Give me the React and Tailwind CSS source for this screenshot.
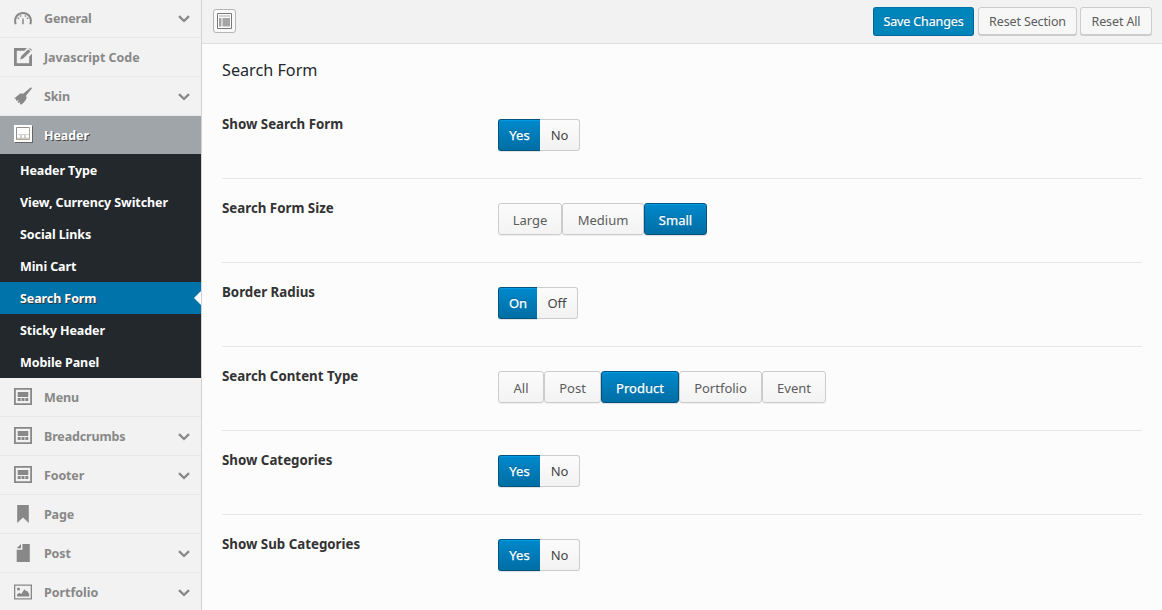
function Glyph({ name }) {
  switch (name) {
    case "gauge":
      return (
        <svg width="18" height="18" viewBox="0 0 18 18" fill="none" stroke="currentColor">
          <path d="M1.6 15.200C-.2 8.500 3.500 4 9 4s9.200 4.500 7.400 11.200" strokeWidth="2" />
          <path d="M9 9.500v5.800" strokeWidth="1.500" />
          <path d="M3.600 9.300h1.600M5.800 7h1.500M10.700 7h1.500M12.800 9.300h1.600" strokeWidth="1.400" />
        </svg>
      );
    case "edit":
      return (
        <svg width="18" height="18" viewBox="0 0 18 18" fill="currentColor">
          <path d="M0 0h13l-2.600 2.800H2.800v12.400h12.400V8.500L18 5.700V18H0z" />
          <path d="M14.200 1.200l2.300 2.200-7.300 7.100-3 .9.900-3.100zM15 .6l.8-.6L18 2l-.8.8z" />
        </svg>
      );
    case "broom":
      return (
        <svg width="18" height="18" viewBox="0 0 18 18" fill="currentColor">
          <path d="M17 .3l1 1-6 7.400.7 2.300c-1.300 2.700-3 4.800-5.500 6.700l-1.300-.6.500-2-1.700 1-1.200-1 1.500-2-2.500.8L1.800 12 0 11.200c2.200-1 3.600-2.800 5.500-4.300 1.200-.5 2.400-.2 3.600-.1z" />
        </svg>
      );
    case "bookmark":
      return (
        <svg width="18" height="18" viewBox="0 0 18 18" fill="currentColor">
          <path d="M3.200 0h11.600v18L9 12.500 3.200 18z" />
        </svg>
      );
    case "file":
      return (
        <svg width="18" height="18" viewBox="0 0 18 18" fill="currentColor">
          <path d="M8.400 0h7.400v18H2.700V5.800h5.700zM7 0v4.300H2.700z" />
        </svg>
      );
    case "picture":
      return (
        <svg width="18" height="18" viewBox="0 0 18 18" fill="currentColor">
          <path fillRule="evenodd" d="M0 1.500h18V16.500H0zM1.300 2.800v12.400h15.400V2.800z" />
          <circle cx="4.500" cy="6" r="1.500" />
          <path d="M3 13.500v-2l2.500-1.700L7.300 11l3-4.800 2 2 .7-.4 2.200 3v2.700z" />
        </svg>
      );
    case "panel-active":
      return (
        <svg width="19" height="18" viewBox="0 0 19 18">
          <path d="M1 1h18v17H1z" fill="#666" />
          <path d="M0 0h18v17H0z" fill="#fff" />
          <path d="M2.500 14.500v-12h13" fill="none" stroke="#938f8c" />
          <path d="M15.500 2.500v12h-13" fill="none" stroke="#b5a78f" />
          <path d="M4 9.500h11" stroke="#d5d5d5" />
          <path d="M7 10v3M11 10v3" stroke="#999" strokeWidth="0.900" />
          <path d="M3 13.300h12" stroke="#a9a9a9" strokeWidth="0.800" />
        </svg>
      );
    default:
      return (
        <svg width="18" height="18" viewBox="0 0 18 18" fill="currentColor">
          <path fillRule="evenodd" d="M0 0h18v17H0zM1.800 1.800v13.400h14.400V1.800z" />
          <path d="M3.700 4h10.600v5H3.700zM3.700 10h3v3h-3zM7.500 10h3v3h-3zM11.300 10h3v3h-3z" />
        </svg>
      );
  }
}

function Chevron() {
  return (
    <svg className="mr-[11px]" width="12" height="8" viewBox="0 0 12 8" fill="none" stroke="currentColor" strokeWidth="2.300">
      <path d="M1 1.200l5 4.800 5-4.800" />
    </svg>
  );
}

function NavItem({ icon, label, expandable, first, tight }) {
  return (
    <div className={(first ? "h-[38px] " : "h-[39px] pt-px ") + "flex shrink-0 items-center border-b border-[#e7e7e7] text-[#888]"}>
      <span className="ml-[14px] mr-[12px] -mt-0.5 block h-[18px] w-[18px]"><Glyph name={icon} /></span>
      <span className={(tight ? "tracking-[-0.15px] " : "tracking-[-0.03px] ") + "flex-1 whitespace-nowrap text-[12.5px] font-bold leading-[18px]"}>{label}</span>
      {expandable && <Chevron />}
    </div>
  );
}

const subItems = ["Header Type", "View, Currency Switcher", "Social Links", "Mini Cart", "Search Form", "Sticky Header", "Mobile Panel"];

function Sidebar() {
  return (
    <aside className="flex h-full w-[202px] shrink-0 flex-col overflow-hidden border-r border-[#d2d2d2] bg-[#f2f2f2]">
      <NavItem first icon="gauge" label="General" expandable tight />
      <NavItem icon="edit" label="Javascript Code" />
      <NavItem icon="broom" label="Skin" expandable tight />
      <div className="flex h-[38px] shrink-0 items-center bg-[#a0a5a9] text-white">
        <span className="-mt-0.5 ml-[14px] mr-[11px] block h-[18px] w-[19px]"><Glyph name="panel-active" /></span>
        <span className="pt-0.5 text-[12.5px] font-bold leading-[18px] tracking-[-0.1px] [text-shadow:1px_1px_0_#444]">Header</span>
      </div>
      <ul className="shrink-0 bg-[#23282d] text-[12.5px] font-bold leading-[32px] tracking-[-0.09px] text-white">
        {subItems.map((t) =>
          t === "Search Form" ? (
            <li key={t} className="flex h-8 items-center justify-between bg-[#0073aa] pl-5 [text-shadow:1px_1px_0_#333]">
              <span className="pt-0.5">{t}</span>
              <svg width="7" height="14" viewBox="0 0 7 14" fill="#fcfcfc"><path d="M7 0v14L0 7z" /></svg>
            </li>
          ) : (
            <li key={t} className="h-8 pl-5 pt-px">{t}</li>
          )
        )}
      </ul>
      <NavItem icon="panel" label="Menu" tight />
      <NavItem icon="panel" label="Breadcrumbs" expandable tight />
      <NavItem icon="panel" label="Footer" expandable tight />
      <NavItem icon="bookmark" label="Page" tight />
      <NavItem icon="file" label="Post" expandable tight />
      <NavItem icon="picture" label="Portfolio" expandable />
    </aside>
  );
}

const activeStyle =
  "relative border-[#00547d] bg-linear-to-b from-[#0089cc] to-[#006ea5] text-white [box-shadow:inset_0_1px_0_#009be6,0_1px_0_#0000001a] [text-shadow:0_-1px_1px_#006799] [-webkit-text-stroke:0.25px_white]";

function Toggle({ on, off, onW, offW }) {
  return (
    <div className="flex h-8 text-[13px] leading-[30px]">
      <button className={onW + " rounded-l-[3px] border border-r-0 " + activeStyle}>{on}</button>
      <button className={offW + " rounded-r-[3px] border border-l-0 border-[#ccc] bg-linear-to-b from-[#fcfcfc] to-[#f2f2f2] text-[#444]"}>{off}</button>
    </div>
  );
}

function ButtonSet({ items, active }) {
  return (
    <div className="flex h-8 text-[13px] leading-[32px]">
      {items.map(([t, w]) => (
        <button
          key={t}
          className={w + " h-8 rounded-[3px] border " + (t === active ? activeStyle : "border-[#ccc] bg-linear-to-b from-[#fbfbfb] to-[#f3f3f3] text-[#5c5c5c] shadow-[0_1px_0_#0000000d]")}
        >
          {t}
        </button>
      ))}
    </div>
  );
}

function Field({ label, last, children }) {
  return (
    <div className={(last ? "" : "border-b border-[#e7e7e7] ") + "flex h-[84px] items-start pt-6"}>
      <div className="-mt-1 w-[276px] text-[13.3px] font-bold leading-[18px] text-[#333]">{label}</div>
      {children}
    </div>
  );
}

export default function App() {
  return (
    <div className="flex h-[610px] w-[1162px] overflow-hidden bg-[#fcfcfc] font-['Noto_Sans','Open_Sans',sans-serif]">
      <Sidebar />
      <main className="flex min-w-0 flex-1 flex-col">
        <header className="flex h-11 shrink-0 items-start justify-between border-b border-[#dedede] bg-[#f2f2f2] pl-[11px] pr-[10px]">
          <button className="mt-[9px] flex h-6 w-[23px] items-center justify-center rounded-[3px] border border-[#b5b5b5] bg-[#f9f9f9]">
            <svg width="15" height="16" viewBox="0 0 15 16">
              <path d="M.5.500h14v15H.500z" fill="#fff" stroke="#777" />
              <path d="M2 2.500h11v1H2zM2 5h2.500v8.500H2zM5.500 5H13v8.500H5.500z" fill="#a5a5a5" />
            </svg>
          </button>
          <div className="flex pt-[7px] text-[12.5px] leading-[27px]">
            <button className="mr-1 h-[29px] w-[101px] rounded-[3px] border border-[#006799] border-t-[#0073aa] bg-[#0085ba] tracking-[-0.13px] text-white [text-shadow:0_-1px_1px_#006799] [-webkit-text-stroke:0.2px_white]">Save Changes</button>
            <button className="mr-[3px] h-[28px] w-[99px] rounded-[3px] border border-[#ccc] bg-[#f7f7f7] tracking-[-0.13px] text-[#5c5c5c] shadow-[0_1px_0_#ccc]">Reset Section</button>
            <button className="h-[28px] w-[72px] rounded-[3px] border border-[#ccc] bg-[#f7f7f7] tracking-[-0.13px] text-[#5c5c5c] shadow-[0_1px_0_#ccc]">Reset All</button>
          </div>
        </header>
        <section className="flex flex-col pl-5 pr-5">
          <h3 className="mt-[15px] h-[36px] text-[16.2px] leading-[22px] text-[#23282d]">Search Form</h3>
          <Field label="Show Search Form"><Toggle on="Yes" off="No" onW="w-[42px]" offW="w-[40px]" /></Field>
          <Field label="Search Form Size">
            <ButtonSet active="Small" items={[["Large", "w-[64px]"], ["Medium", "w-[82px]"], ["Small", "w-[63px]"]]} />
          </Field>
          <Field label="Border Radius"><Toggle on="On" off="Off" onW="w-[39px]" offW="w-[41px]" /></Field>
          <Field label="Search Content Type">
            <ButtonSet active="Product" items={[["All", "w-[46px]"], ["Post", "w-[57px]"], ["Product", "w-[78px]"], ["Portfolio", "w-[83px]"], ["Event", "w-[64px]"]]} />
          </Field>
          <Field label="Show Categories"><Toggle on="Yes" off="No" onW="w-[42px]" offW="w-[40px]" /></Field>
          <Field last label="Show Sub Categories"><Toggle on="Yes" off="No" onW="w-[42px]" offW="w-[40px]" /></Field>
        </section>
      </main>
    </div>
  );
}
